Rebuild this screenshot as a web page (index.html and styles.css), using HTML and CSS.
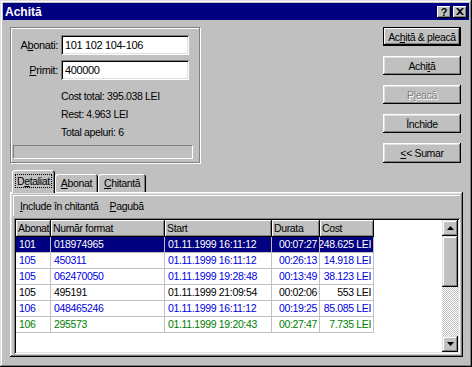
FILE: index.html
```html
<!DOCTYPE html>
<html lang="ro">
<head>
  <meta charset="UTF-8" />
  <title>Achită</title>
  <link rel="stylesheet" href="styles.css">
</head>
<body>
  <div class="window">
    <!-- TITLE BAR -->
    <div class="titlebar">
      <span class="title">Achită</span>
      <div class="caption-btns">
        <span class="cbtn help">?</span>
        <span class="cbtn">
          <svg width="8" height="7" viewBox="0 0 8 7"><path d="M0 0h2l2 2 2-2h2L5 3.5 8 7H6L4 5 2 7H0l3-3.5z" fill="#000"/></svg>
        </span>
      </div>
    </div>

    <div class="content">
      <div class="top">
        <div class="groupbox">
          <div class="field">
            <label>A<u>b</u>onati:</label>
            <div class="input">101 102 104-106</div>
          </div>
          <div class="field">
            <label><u>P</u>rimit:</label>
            <div class="input">400000</div>
          </div>
          <div class="info">
            <div>Cost total: 395.038 LEI</div>
            <div>Rest: 4.963 LEI</div>
            <div>Total apeluri: 6</div>
          </div>
          <div class="progress"></div>
        </div>

        <div class="buttons">
          <button class="btn default">Ac<u>h</u>ită &amp; pleacă</button>
          <button class="btn">Achi<u>t</u>ă</button>
          <button class="btn disabled">P<u>l</u>eacă</button>
          <button class="btn">Închide</button>
          <button class="btn sumar"><u>&lt;</u>&lt; Sumar</button>
        </div>
      </div>

      <!-- TABS -->
      <div class="tabs">
        <div class="tab active"><span class="focus">D<u>e</u>taliat</span></div>
        <div class="tab"><u>A</u>bonat</div>
        <div class="tab"><u>C</u>hitantă</div>
      </div>
      <div class="panel">
        <div class="toolbar">
          <span><u>I</u>nclude în chitantă</span>
          <span><u>P</u>agubă</span>
        </div>
        <div class="listview">
          <div class="list">
            <div class="row head">
              <div>Abonat</div><div>Număr format</div><div>Start</div><div>Durata</div><div>Cost</div>
            </div>
            <div class="row selected">
              <div>101</div><div>018974965</div><div>01.11.1999 16:11:12</div><div class="num">00:07:27</div><div class="num">248.625 LEI</div>
            </div>
            <div class="row blue">
              <div>105</div><div>450311</div><div>01.11.1999 16:11:12</div><div class="num">00:26:13</div><div class="num">14.918 LEI</div>
            </div>
            <div class="row blue">
              <div>105</div><div>062470050</div><div>01.11.1999 19:28:48</div><div class="num">00:13:49</div><div class="num">38.123 LEI</div>
            </div>
            <div class="row">
              <div>105</div><div>495191</div><div>01.11.1999 21:09:54</div><div class="num">00:02:06</div><div class="num">553 LEI</div>
            </div>
            <div class="row blue">
              <div>106</div><div>048465246</div><div>01.11.1999 16:11:12</div><div class="num">00:19:25</div><div class="num">85.085 LEI</div>
            </div>
            <div class="row green">
              <div>106</div><div>295573</div><div>01.11.1999 19:20:43</div><div class="num">00:27:47</div><div class="num">7.735 LEI</div>
            </div>
          </div>
          <div class="scrollbar">
            <div class="sbtn"><svg width="7" height="4" viewBox="0 0 7 4"><path d="M3.5 0L7 4H0z" fill="#000"/></svg></div>
            <div class="thumb"></div>
            <div class="track"></div>
            <div class="sbtn"><svg width="7" height="4" viewBox="0 0 7 4"><path d="M0 0h7L3.5 4z" fill="#000"/></svg></div>
          </div>
        </div>
      </div>
    </div>
  </div>
</body>
</html>
```

FILE: styles.css
```css
body {
  margin: 0;
  background: #c0c0c0;
  font-family: 'Liberation Sans', Arial, sans-serif;
  font-size: 10.5px;
  letter-spacing: -0.35px;
  color: #000;
}
.window {
  width: 472px;
  height: 367px;
  box-sizing: border-box;
  padding: 3px;
  background: #c0c0c0;
  box-shadow: inset -1px -1px #000, inset 1px 1px #dfdfdf, inset -2px -2px #808080, inset 2px 2px #fff;
}
.titlebar {
  height: 17px;
  background: #000080;
  color: #fff;
  display: flex;
  align-items: center;
  justify-content: space-between;
  padding: 0 2px;
}
.title {
  font-weight: bold;
  font-size: 12px;
  letter-spacing: 0;
}
.caption-btns {
  display: flex;
  gap: 2px;
}
.cbtn {
  width: 14px;
  height: 12px;
  background: #c0c0c0;
  color: #000;
  display: flex;
  align-items: center;
  justify-content: center;
  font-weight: bold;
  font-size: 11px;
  letter-spacing: 0;
  box-shadow: inset -1px -1px #000, inset 1px 1px #fff, inset -2px -2px #808080;
}
.content {
  padding: 7px 6px 0 7px;
}
.top {
  display: flex;
  justify-content: space-between;
  align-items: flex-start;
}
.groupbox {
  width: 190px;
  height: 136px;
  box-sizing: border-box;
  border: 1px solid #808080;
  box-shadow: inset 1px 1px #fff, 1px 1px #fff;
  padding: 7px 0 0 2px;
  display: flex;
  flex-direction: column;
}
.field {
  display: flex;
  align-items: center;
  gap: 3px;
  margin-bottom: 5px;
}
.field label {
  width: 45px;
  text-align: right;
  font-size: 11px;
}
.input {
  width: 128px;
  height: 20px;
  box-sizing: border-box;
  background: #fff;
  padding: 4px 4px 0;
  font-size: 11px;
  box-shadow: inset 1px 1px #808080, inset -1px -1px #fff, inset 2px 2px #000, inset -2px -2px #dfdfdf;
}
.info {
  margin: 2px 0 0 48px;
}
.info div {
  height: 18px;
  line-height: 18px;
}
.progress {
  width: 180px;
  height: 14px;
  margin-top: 4px;
  box-sizing: border-box;
  border: 1px solid;
  border-color: #808080 #fff #fff #808080;
}
.buttons {
  width: 78px;
  margin-right: 2px;
  display: flex;
  flex-direction: column;
  gap: 10px;
}
.btn {
  height: 19px;
  padding: 0;
  border: none;
  background: #c0c0c0;
  font: inherit;
  letter-spacing: inherit;
  white-space: nowrap;
  color: #000;
  box-shadow: inset -1px -1px #000, inset 1px 1px #fff, inset -2px -2px #808080, inset 2px 2px #dfdfdf;
}
.btn.default {
  box-shadow: inset 0 0 0 1px #000, inset -2px -2px #000, inset 2px 2px #fff, inset -3px -3px #808080;
}
.btn.disabled {
  color: #808080;
  text-shadow: 1px 1px #fff;
}
.btn.sumar {
  height: 20px;
}
.tabs {
  margin-top: 9px;
  height: 20px;
  padding-left: 2px;
  display: flex;
  align-items: flex-end;
  position: relative;
  z-index: 1;
}
.tab {
  height: 18px;
  padding: 0 6px;
  display: flex;
  align-items: center;
  background: #c0c0c0;
  border-radius: 3px 3px 0 0;
  box-shadow: inset 1px 1px #fff, inset -1px 0 #000, inset -2px 0 #808080;
}
.tab.active {
  height: 21px;
  margin-bottom: -1px;
  padding: 0 4px 2px;
}
.focus {
  outline: 1px dotted #000;
  outline-offset: 0;
  padding: 0 1px;
}
.panel {
  height: 165px;
  box-sizing: border-box;
  padding: 3px 3px 2px 3px;
  box-shadow: inset -1px -1px #000, inset 1px 1px #fff, inset -2px -2px #808080, inset 2px 2px #dfdfdf;
}
.toolbar {
  height: 21px;
  display: flex;
  align-items: center;
  gap: 11px;
  padding-left: 7px;
  box-shadow: inset 1px 1px #fff;
}
.listview {
  margin: 2px 0 0 1px;
  width: 446px;
  height: 136px;
  box-sizing: border-box;
  padding: 2px;
  display: flex;
  box-shadow: inset 1px 1px #808080, inset -1px -1px #fff, inset 2px 2px #000, inset -2px -2px #dfdfdf;
}
.list {
  flex: 1;
  background: #fff;
  overflow: hidden;
}
.row {
  display: grid;
  grid-template-columns: 35px 114px 107px 48px 54px;
  height: 16px;
}
.row > div {
  box-sizing: border-box;
  border-right: 1px solid #c0c0c0;
  border-bottom: 1px solid #c0c0c0;
  padding: 0 3px;
  line-height: 15px;
  white-space: nowrap;
  overflow: hidden;
}
.row > .num {
  display: flex;
  justify-content: flex-end;
  padding-right: 2px;
}
.row.head {
  height: 17px;
}
.row.head > div {
  border: none;
  background: #c0c0c0;
  line-height: 17px;
  padding-left: 2px;
  box-shadow: inset -1px -1px #000, inset 1px 1px #fff, inset -2px -2px #808080;
}
.row.selected > div {
  background: #000080;
  color: #fff;
}
.row.blue { color: #0000e0; }
.row.green { color: #008000; }
.scrollbar {
  width: 16px;
  display: flex;
  flex-direction: column;
}
.sbtn, .thumb {
  height: 16px;
  display: flex;
  align-items: center;
  justify-content: center;
  background: #c0c0c0;
  box-shadow: inset -1px -1px #000, inset 1px 1px #dfdfdf, inset -2px -2px #808080, inset 2px 2px #fff;
}
.thumb {
  height: 51px;
}
.track {
  flex: 1;
  background: repeating-conic-gradient(#c0c0c0 0 25%, #fff 0 50%) 0 0 / 2px 2px;
}
```
